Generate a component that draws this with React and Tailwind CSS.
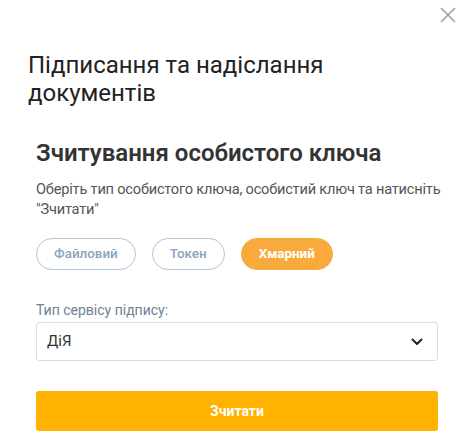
import React, { useState } from "react";

const ChevronIcon = () => (
  <svg width="12" height="8" viewBox="0 0 12 8" fill="none">
    <path d="M1.5 1.5L6 6L10.5 1.5" stroke="#222" strokeWidth="2" strokeLinecap="round" strokeLinejoin="round" />
  </svg>
);

const CloseIcon = () => (
  <svg width="16" height="16" viewBox="0 0 16 16" fill="none">
    <path d="M1 1L15 15M15 1L1 15" stroke="#8aa4bd" strokeWidth="1.6" />
  </svg>
);

const App = () => {
  const [keyType, setKeyType] = useState("cloud");

  const types = [
    { value: "file", label: "Файловий" },
    { value: "token", label: "Токен" },
    { value: "cloud", label: "Хмарний" },
  ];

  return (
    <div className="relative w-[467px] h-[439px] bg-white overflow-hidden font-['Roboto',sans-serif]">
      {/* Close */}
      <button className="absolute top-[6px] right-[10px] p-[1px]">
        <CloseIcon />
      </button>

      {/* Header */}
      <div className="pl-[28px] pr-[29px] pt-[51px]">
        <h2 className="text-[24px] leading-[28px] text-[#222]">
          Підписання та надіслання документів
        </h2>
      </div>

      {/* Content */}
      <div className="pl-[36px] pr-[29px] pt-[32px]">
        <h3 className="text-[24px] leading-[28px] font-semibold text-[#333]">
          Зчитування особистого ключа
        </h3>
        <p className="mt-[12px] whitespace-nowrap text-[14.6px] leading-[20px] tracking-[-0.2px] text-[#555]">
          Оберіть тип особистого ключа, особистий ключ та натисніть
          <br />
          "Зчитати"
        </p>

        <div className="flex gap-[16px] mt-[19px]">
          {types.map((t) =>
            t.value === keyType ? (
              <button
                key={t.value}
                onClick={() => setKeyType(t.value)}
                className="h-[32px] px-[17px] rounded-full bg-[#f9aa3d] border border-[#f9aa3d] text-white text-[13.4px] font-bold"
              >
                {t.label}
              </button>
            ) : (
              <button
                key={t.value}
                onClick={() => setKeyType(t.value)}
                className="h-[32px] px-[17px] rounded-full border border-[#b3c5d6] text-[#8aa4bd] text-[13.4px] font-medium"
              >
                {t.label}
              </button>
            )
          )}
        </div>

        <label className="block mt-[31px] text-[14px] leading-[18px] text-[#6f8194]">
          Тип сервісу підпису:
        </label>
        <div className="mt-[3px] h-[39px] border border-[#d6dfe8] rounded-[3px] flex items-center justify-between pl-[10px] pr-[14px]">
          <span className="text-[15px] text-[#333]">ДіЯ</span>
          <ChevronIcon />
        </div>

        <button className="mt-[30px] w-full h-[40px] rounded-[3px] bg-[#ffb300] text-white text-[14px] font-bold">
          Зчитати
        </button>
      </div>
    </div>
  );
};

export default App;
